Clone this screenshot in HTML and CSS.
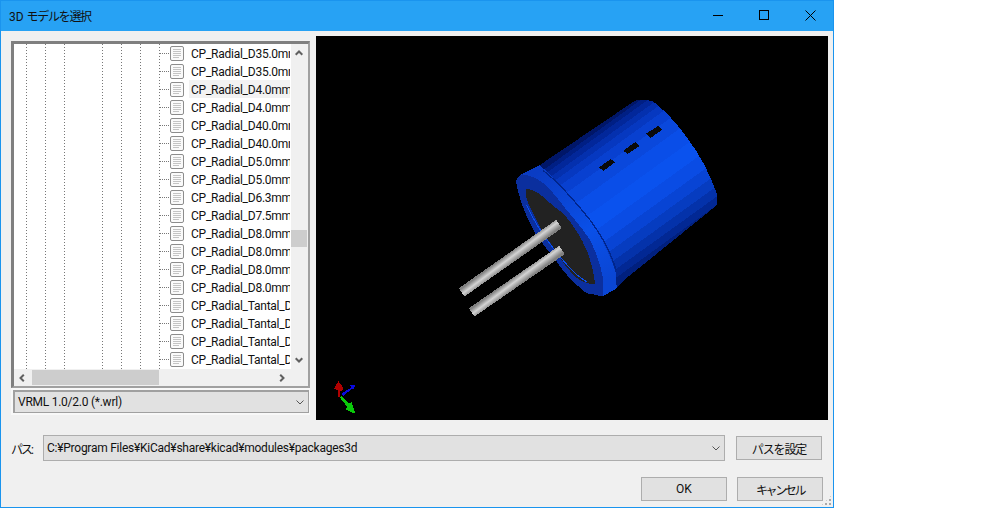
FILE: index.html
```html
<!DOCTYPE html>
<html lang="ja">
<head>
<meta charset="utf-8">
<title>3D モデルを選択</title>
<link rel="stylesheet" href="styles.css">
</head>
<body>
<svg class="defs" width="0" height="0" aria-hidden="true">
  <symbol id="doc" viewBox="0 0 14 15">
    <rect x="0.5" y="0.5" width="13" height="14" rx="1.5" fill="#fafafa" stroke="#8c8c8c"/>
    <path d="M3 3.5h8M3 5.5h8M3 7.5h8M3 9.5h8M3 11.5h6" stroke="#c4c4c4" fill="none"/>
  </symbol>
  <symbol id="chev-up" viewBox="0 0 8 6"><path d="M0.7 4.8L4 1.5L7.3 4.8" fill="none" stroke="#606060" stroke-width="2"/></symbol>
  <symbol id="chev-down" viewBox="0 0 8 6"><path d="M0.7 1.2L4 4.5L7.3 1.2" fill="none" stroke="#606060" stroke-width="2"/></symbol>
  <symbol id="chev-left" viewBox="0 0 6 8"><path d="M4.8 0.7L1.5 4L4.8 7.3" fill="none" stroke="#606060" stroke-width="2"/></symbol>
  <symbol id="chev-right" viewBox="0 0 6 8"><path d="M1.2 0.7L4.5 4L1.2 7.3" fill="none" stroke="#606060" stroke-width="2"/></symbol>
  <symbol id="combo-arrow" viewBox="0 0 8 5"><path d="M0.5 0.5L4 4L7.5 0.5" fill="none" stroke="#555" stroke-width="1"/></symbol>
</svg>

<div class="dialog">
  <header class="titlebar">
    <span class="title">3D <span class="title-jp">モデルを選択</span></span>
    <div class="win-controls">
      <span class="win-btn"><svg width="10" height="10" viewBox="0 0 10 10"><path d="M0 5.5h10" stroke="#000"/></svg></span>
      <span class="win-btn"><svg width="10" height="10" viewBox="0 0 10 10"><rect x="0.5" y="0.5" width="9" height="9" fill="none" stroke="#000"/></svg></span>
      <span class="win-btn"><svg width="11" height="11" viewBox="0 0 11 11"><path d="M0.5 0.5L10.5 10.5M10.5 0.5L0.5 10.5" stroke="#000" fill="none"/></svg></span>
    </div>
  </header>

  <main class="content">
    <div class="main-row">
      <section class="left-col">
        <div class="tree-panel">
          <div class="tree-main">
            <ul class="tree-rows">
              <li class="row"><span class="stub"></span><svg class="doc"><use href="#doc"/></svg><span class="label">CP_Radial_D35.0mm_P10.00mm</span></li>
              <li class="row"><span class="stub"></span><svg class="doc"><use href="#doc"/></svg><span class="label">CP_Radial_D35.0mm_P15.00mm</span></li>
              <li class="row row-hover"><span class="stub"></span><svg class="doc"><use href="#doc"/></svg><span class="label">CP_Radial_D4.0mm_P1.50mm</span></li>
              <li class="row"><span class="stub"></span><svg class="doc"><use href="#doc"/></svg><span class="label">CP_Radial_D4.0mm_P2.00mm</span></li>
              <li class="row"><span class="stub"></span><svg class="doc"><use href="#doc"/></svg><span class="label">CP_Radial_D40.0mm_P10.00mm</span></li>
              <li class="row"><span class="stub"></span><svg class="doc"><use href="#doc"/></svg><span class="label">CP_Radial_D40.0mm_P15.00mm</span></li>
              <li class="row"><span class="stub"></span><svg class="doc"><use href="#doc"/></svg><span class="label">CP_Radial_D5.0mm_P2.00mm</span></li>
              <li class="row"><span class="stub"></span><svg class="doc"><use href="#doc"/></svg><span class="label">CP_Radial_D5.0mm_P2.50mm</span></li>
              <li class="row"><span class="stub"></span><svg class="doc"><use href="#doc"/></svg><span class="label">CP_Radial_D6.3mm_P2.50mm</span></li>
              <li class="row"><span class="stub"></span><svg class="doc"><use href="#doc"/></svg><span class="label">CP_Radial_D7.5mm_P2.50mm</span></li>
              <li class="row"><span class="stub"></span><svg class="doc"><use href="#doc"/></svg><span class="label">CP_Radial_D8.0mm_P2.50mm</span></li>
              <li class="row"><span class="stub"></span><svg class="doc"><use href="#doc"/></svg><span class="label">CP_Radial_D8.0mm_P3.50mm</span></li>
              <li class="row"><span class="stub"></span><svg class="doc"><use href="#doc"/></svg><span class="label">CP_Radial_D8.0mm_P3.80mm</span></li>
              <li class="row"><span class="stub"></span><svg class="doc"><use href="#doc"/></svg><span class="label">CP_Radial_D8.0mm_P5.00mm</span></li>
              <li class="row"><span class="stub"></span><svg class="doc"><use href="#doc"/></svg><span class="label">CP_Radial_Tantal_D10.5mm</span></li>
              <li class="row"><span class="stub"></span><svg class="doc"><use href="#doc"/></svg><span class="label">CP_Radial_Tantal_D4.5mm</span></li>
              <li class="row"><span class="stub"></span><svg class="doc"><use href="#doc"/></svg><span class="label">CP_Radial_Tantal_D5.0mm</span></li>
              <li class="row"><span class="stub"></span><svg class="doc"><use href="#doc"/></svg><span class="label">CP_Radial_Tantal_D5.5mm</span></li>
            </ul>
            <div class="vscroll">
              <svg class="chev-v chev-top"><use href="#chev-up"/></svg>
              <div class="vthumb"></div>
              <svg class="chev-v chev-bottom"><use href="#chev-down"/></svg>
            </div>
          </div>
          <div class="hscroll">
            <svg class="chev-h chev-left"><use href="#chev-left"/></svg>
            <div class="hthumb"></div>
            <svg class="chev-h chev-right"><use href="#chev-right"/></svg>
          </div>
        </div>
        <div class="filter-wrap">
          <div class="filter">
            <span>VRML 1.0/2.0 (*.wrl)</span>
            <svg class="combo-arrow"><use href="#combo-arrow"/></svg>
          </div>
        </div>
      </section>

      <div class="canvas">
        <svg class="scene" width="512" height="384" viewBox="-372 -132 1536 1152" shape-rendering="crispEdges">
          <defs>
            <linearGradient id="bodyGrad" gradientUnits="userSpaceOnUse" x1="455" y1="150" x2="700" y2="490">
              <stop offset="0" stop-color="#001668"/>
              <stop offset="0.03" stop-color="#001668"/>
              <stop offset="0.03" stop-color="#001f84"/>
              <stop offset="0.06" stop-color="#001f84"/>
              <stop offset="0.06" stop-color="#02279a"/>
              <stop offset="0.1" stop-color="#02279a"/>
              <stop offset="0.1" stop-color="#0430ae"/>
              <stop offset="0.14" stop-color="#0430ae"/>
              <stop offset="0.14" stop-color="#0638c0"/>
              <stop offset="0.19" stop-color="#0638c0"/>
              <stop offset="0.19" stop-color="#0840d0"/>
              <stop offset="0.26" stop-color="#0840d0"/>
              <stop offset="0.26" stop-color="#0a48dc"/>
              <stop offset="0.36" stop-color="#0a48dc"/>
              <stop offset="0.36" stop-color="#0a4ee8"/>
              <stop offset="0.48" stop-color="#0a4ee8"/>
              <stop offset="0.48" stop-color="#0a52ee"/>
              <stop offset="0.6" stop-color="#0a52ee"/>
              <stop offset="0.6" stop-color="#0a4ce4"/>
              <stop offset="0.7" stop-color="#0a4ce4"/>
              <stop offset="0.7" stop-color="#0844d4"/>
              <stop offset="0.78" stop-color="#0844d4"/>
              <stop offset="0.78" stop-color="#063cc0"/>
              <stop offset="0.85" stop-color="#063cc0"/>
              <stop offset="0.85" stop-color="#0432aa"/>
              <stop offset="0.91" stop-color="#0432aa"/>
              <stop offset="0.91" stop-color="#022894"/>
              <stop offset="0.96" stop-color="#022894"/>
              <stop offset="0.96" stop-color="#01207e"/>
              <stop offset="1" stop-color="#01207e"/>
            </linearGradient>
            <linearGradient id="flangeGrad" gradientUnits="userSpaceOnUse" x1="290" y1="280" x2="500" y2="600">
              <stop offset="0" stop-color="#0a3cc4"/>
              <stop offset="0.6" stop-color="#0a50e8"/>
              <stop offset="1" stop-color="#0a46d4"/>
            </linearGradient>
            <linearGradient id="lead1" gradientUnits="userSpaceOnUse" x1="202" y1="523" x2="220" y2="547">
              <stop offset="0" stop-color="#808080"/>
              <stop offset="0.45" stop-color="#d4d4d4"/>
              <stop offset="1" stop-color="#808080"/>
            </linearGradient>
            <linearGradient id="lead2" gradientUnits="userSpaceOnUse" x1="221" y1="591" x2="239" y2="615">
              <stop offset="0" stop-color="#808080"/>
              <stop offset="0.45" stop-color="#d4d4d4"/>
              <stop offset="1" stop-color="#808080"/>
            </linearGradient>
          </defs>
          <path d="M298 256L585 62Q612 54 640 65C700 110 790 220 830 340V376L555 598L530 625Z" fill="url(#bodyGrad)"/>
          <path d="M228 305C232 285 250 280 250 280L298 256C340 285 400 360 430 400C470 450 515 530 528 580L530 625L490 648Q480 650 470 645L440 640C400 610 360 565 340 530C310 495 285 465 270 430C250 390 235 345 228 305Z" fill="url(#flangeGrad)"/>
          <path d="M310 272C360 310 410 370 450 420C480 460 510 510 528 570" fill="none" stroke="#00258c" stroke-width="4"/>
          <path d="M228 305C232 285 250 280 250 285C270 285 290 295 310 310C340 335 360 365 380 390C410 425 430 450 450 480C470 520 485 565 490 600L488 648Q480 650 470 645L440 640C400 610 360 565 340 530C310 495 285 465 270 430C250 390 235 345 228 305Z" fill="#0b2f9e"/>
          <path d="M258 328C270 322 300 340 320 360C340 378 355 390 370 400C400 435 425 475 440 510C455 550 462 585 465 610Q458 616 450 612C430 605 415 600 400 585C375 560 355 525 335 495C315 470 300 445 285 410C270 385 262 365 258 350Z" fill="#222"/>
          <path d="M260 375C275 410 305 460 340 505C375 550 410 590 440 605" fill="none" stroke="#0a50f0" stroke-width="3"/>
          <line x1="65" y1="637" x2="357" y2="432" stroke="url(#lead1)" stroke-width="30"/>
          <line x1="95" y1="697" x2="366" y2="510" stroke="url(#lead2)" stroke-width="30"/>
          <g fill="#0a0a0a">
            <polygon points="477,262 512,237 525,247 490,273"/>
            <polygon points="550,212 586,186 598,198 563,222"/>
            <polygon points="618,161 654,138 666,150 631,174"/>
          </g>
          <g transform="translate(-345 870)">
            <polygon points="40,33 54,52 52,62 46,62 46,82 40,82 40,62 28,56" fill="#b00000"/>
            <polygon points="50,70 80,52 76,46 92,44 84,60 82,56 54,78" fill="#0a0ae0"/>
            <polygon points="44,82 50,78 72,100 80,96 92,132 62,118 68,112" fill="#0ac80a"/>
          </g>
        </svg>
      </div>
    </div>

    <div class="path-row">
      <label class="path-label">パス:</label>
      <div class="path-combo">
        <span>C:¥Program Files¥KiCad¥share¥kicad¥modules¥packages3d</span>
        <svg class="combo-arrow"><use href="#combo-arrow"/></svg>
      </div>
      <button class="btn btn-set"><span class="jp-set">パスを設定</span></button>
    </div>

    <div class="button-row">
      <button class="btn">OK</button>
      <button class="btn"><span class="jp-cancel">キャンセル</span></button>
    </div>
  </main>
  <div class="grip"></div>
</div>
</body>
</html>
```
FILE: styles.css
```css
* { box-sizing: border-box; }
html, body { margin: 0; padding: 0; background: #fff; }
body {
  font-family: Roboto, "Noto Sans CJK JP", sans-serif;
  font-size: 12px;
  letter-spacing: -0.25px;
  color: #111;
}
.defs { position: absolute; }

.dialog {
  position: relative;
  width: 834px;
  height: 508px;
  background: #f0f0f0;
  border: 1px solid #1a94ee;
  display: flex;
  flex-direction: column;
}
.titlebar {
  height: 30px;
  background: #27a2f4;
  display: flex;
  align-items: center;
  justify-content: space-between;
  padding-left: 8px;
  flex: none;
}
.title {
  font-size: 12px;
  letter-spacing: 0;
  color: #111;
  margin-bottom: 2px;
}
.title-jp { letter-spacing: -1.3px; }
.win-controls { display: flex; margin-bottom: 2px; }
.win-btn {
  width: 46px;
  height: 28px;
  display: flex;
  align-items: center;
  justify-content: center;
}

.content { flex: 1; display: flex; flex-direction: column; padding: 5px 0 0 10px; }
.main-row { display: flex; align-items: flex-start; }

.left-col { width: 299px; margin-top: 5px; }
.tree-panel {
  width: 299px;
  border-top: 3px solid #7f7f7f;
  border-left: 3px solid #7f7f7f;
  border-right: 2px solid #a0a0a0;
  border-bottom: 2px solid #a0a0a0;
  background: #f0f0f0;
}
.tree-main { display: flex; height: 325px; }
.tree-rows {
  list-style: none;
  margin: 0;
  padding: 0;
  width: 277px;
  height: 325px;
  overflow: hidden;
  background-color: #fff;
  background-image:
    repeating-linear-gradient(to bottom, #777 0 1px, transparent 1px 3px),
    repeating-linear-gradient(to bottom, #777 0 1px, transparent 1px 3px),
    repeating-linear-gradient(to bottom, #777 0 1px, transparent 1px 3px),
    repeating-linear-gradient(to bottom, #777 0 1px, transparent 1px 3px),
    repeating-linear-gradient(to bottom, #777 0 1px, transparent 1px 3px),
    repeating-linear-gradient(to bottom, #777 0 1px, transparent 1px 3px),
    repeating-linear-gradient(to bottom, #777 0 1px, transparent 1px 3px);
  background-size: 1px 100%;
  background-repeat: no-repeat;
  background-position: 12px 0, 31px 0, 50px 0, 88px 0, 107px 0, 126px 0, 145px 0;
}
.row {
  height: 18px;
  display: flex;
  align-items: center;
  padding-left: 146px;
  white-space: nowrap;
}
.stub {
  width: 10px;
  height: 1px;
  flex: none;
  background-image: repeating-linear-gradient(to right, #777 0 1px, transparent 1px 2px);
}
.doc { width: 14px; height: 15px; flex: none; align-self: flex-start; margin-top: 2px; }
.label {
  margin-left: 5px;
  padding-left: 2px;
  height: 18px;
  line-height: 20px;
  width: 101px;
  overflow: hidden;
  flex: none;
}
.row-hover .label { background: #f2f2f2; }

.vscroll { width: 16px; background: #f0f0f0; display: flex; flex-direction: column; align-items: center; }
.chev-v { width: 8px; height: 6px; flex: none; }
.chev-top { margin-top: 6px; }
.vthumb { width: 16px; height: 17px; background: #cdcdcd; margin-top: 174px; }
.chev-bottom { margin-top: 110px; }

.hscroll { height: 17px; display: flex; align-items: center; background: #f0f0f0; }
.chev-h { width: 6px; height: 8px; flex: none; }
.chev-left { margin-left: 5px; }
.hthumb { width: 127px; height: 15px; background: #cdcdcd; margin-left: 7px; }
.chev-right { margin-left: 120px; }

.filter-wrap { padding: 2px 1px 2px 2px; background: #f8f8f8; }
.filter {
  height: 23px;
  border: 1px solid #a0a0a0;
  border-top-width: 2px;
  border-left-width: 2px;
  background: #e1e1e1;
  display: flex;
  align-items: center;
  justify-content: space-between;
  padding: 0 4px 0 3px;
}
.combo-arrow { width: 8px; height: 5px; flex: none; }

.canvas { width: 512px; height: 384px; margin-left: 6px; background: #000; flex: none; }
.scene { display: block; }

.path-row { display: flex; align-items: center; margin-top: 15px; height: 26px; }
.path-label { width: 32px; letter-spacing: -2px; }
.path-combo {
  width: 682px;
  height: 26px;
  border: 1px solid #adadad;
  background: #e1e1e1;
  display: flex;
  align-items: center;
  justify-content: space-between;
  padding: 0 4px 0 3px;
}
.btn {
  width: 86px;
  height: 24px;
  border: 1px solid #adadad;
  background: #e1e1e1;
  font-family: Roboto, "Noto Sans CJK JP", sans-serif;
  font-size: 12px;
  color: #111;
  padding: 0;
}
.jp-set { letter-spacing: -1.1px; }
.jp-cancel { letter-spacing: -2.4px; }
.btn-set { margin-left: 11px; }
.button-row { display: flex; justify-content: flex-end; gap: 10px; margin-top: 16px; padding-right: 10px; }

.grip {
  position: absolute;
  right: 1px;
  bottom: 1px;
  width: 11px;
  height: 11px;
  background-image: radial-gradient(circle at 1px 1px, #a8a8a8 1px, transparent 1.2px);
  background-size: 4px 4px;
  clip-path: polygon(100% 0, 100% 100%, 0 100%);
}
```
